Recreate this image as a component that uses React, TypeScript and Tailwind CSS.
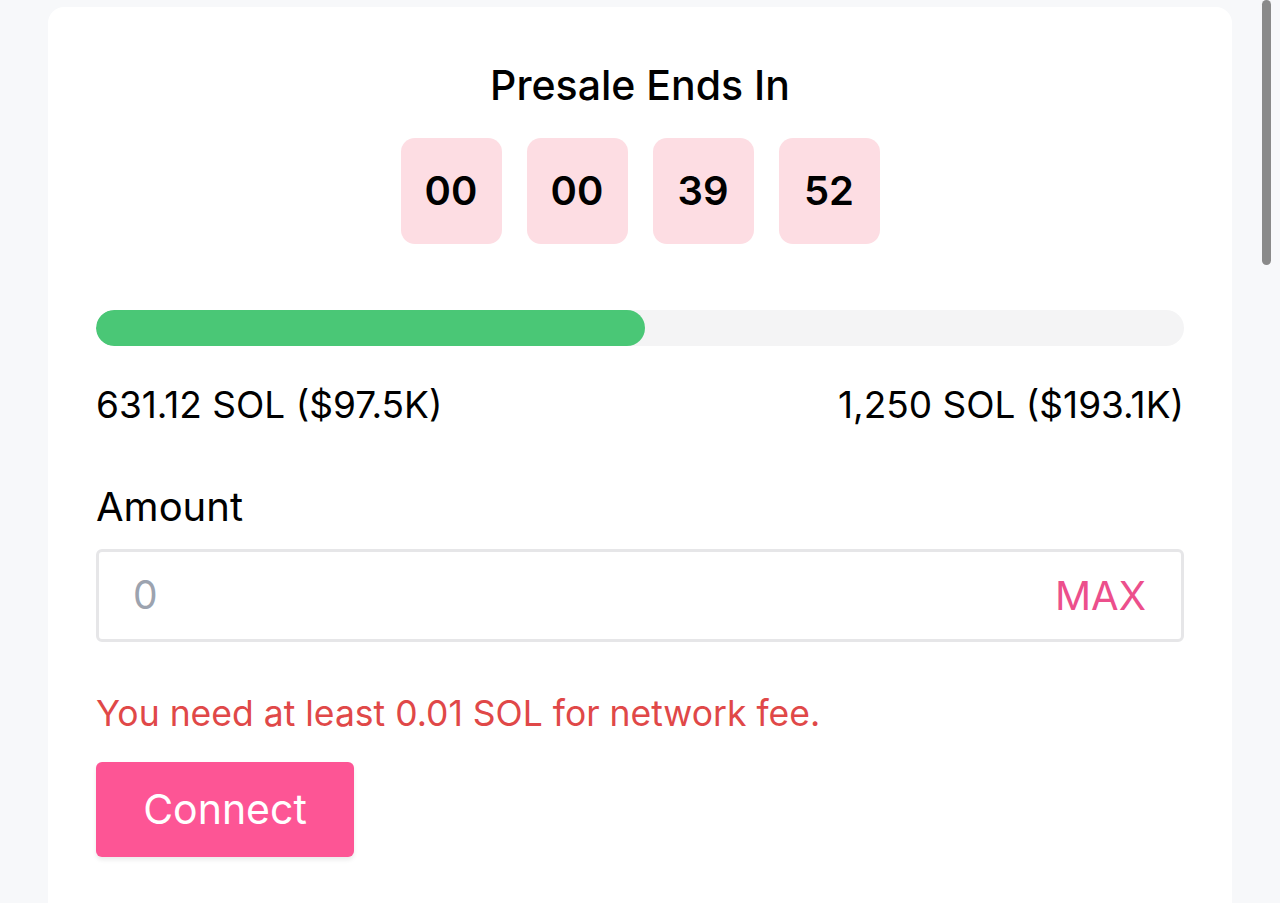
const digits = ['00', '00', '39', '52']

export default function App() {
  const raised = 631.12
  const goal = 1250
  const pct = (raised / goal) * 100

  return (
    <div className="relative h-[903px] overflow-hidden bg-[#f7f8fa] px-[48px] pt-[7px] font-['Inter',sans-serif] text-black">
      <div className="h-[920px] rounded-[16px] bg-white px-[48px] pt-[55px]">
        <h1 className="text-center text-[41px] font-medium leading-[46px]">Presale Ends In</h1>

        <div className="mt-[30px] flex justify-center gap-[25px]">
          {digits.map((d, i) => (
            <div
              key={i}
              className="flex h-[106px] w-[101px] items-center justify-center rounded-[14px] bg-[#fddde3] text-[40px] font-semibold"
            >
              {d}
            </div>
          ))}
        </div>

        <div className="mt-[66px] h-[36px] w-full overflow-hidden rounded-full bg-[#f4f4f5]">
          <div className="h-full rounded-full bg-[#4ac776]" style={{ width: `${pct}%` }} />
        </div>

        <div className="mt-[39px] flex justify-between text-[37px] leading-[40px]">
          <span>631.12 SOL ($97.5K)</span>
          <span>1,250 SOL ($193.1K)</span>
        </div>

        <label className="mt-[59px] block text-[40px] leading-[46px]">Amount</label>
        <div className="mt-[19px] flex h-[93px] items-center justify-between rounded-[6px] border-[3px] border-[#e6e6e8] pl-[34px] pr-[35px] text-[39px]">
          <span className="text-[#9ca3af]">0</span>
          <button type="button" className="text-[40px] text-[#ec4f8c]">
            MAX
          </button>
        </div>

        <p className="mt-[52px] text-[35.5px] leading-[40px] text-[#e04848]">
          You need at least 0.01 SOL for network fee.
        </p>

        <button
          type="button"
          className="mt-[28px] h-[95px] w-[258px] rounded-[6px] bg-[#fd5595] text-[41px] text-white shadow-[0_3px_4px_rgba(0,0,0,0.08)]"
        >
          Connect
        </button>
      </div>

      <div className="absolute right-[9px] top-0 h-[265px] w-[9px] rounded-full bg-[#8a8a8a]" />
    </div>
  )
}
